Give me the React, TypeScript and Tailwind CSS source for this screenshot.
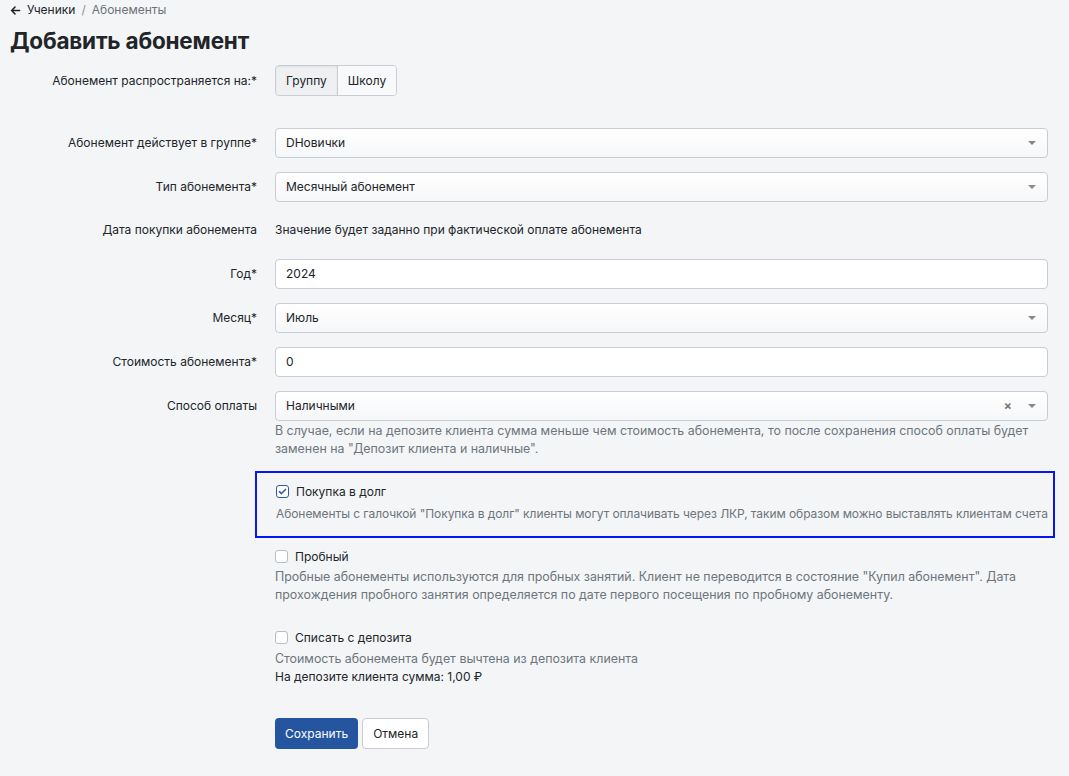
import React from 'react';

const Caret = () => (
  <span className="ml-2 inline-block h-0 w-0 border-x-[4px] border-t-[4px] border-x-transparent border-t-[#888]" />
);

const Row: React.FC<{ label: string; children: React.ReactNode; className?: string }> = ({ label, children, className }) => (
  <div className={`flex items-center ${className ?? ''}`}>
    <div className="w-[247px] shrink-0 text-right text-[12px] text-[#212529]">{label}</div>
    <div className="ml-[18px] flex-1">{children}</div>
  </div>
);

const Select: React.FC<{ value: string; clearable?: boolean }> = ({ value, clearable }) => (
  <div className="flex h-[30px] items-center rounded-[4px] border border-[#c9cdd3] bg-gradient-to-b from-white to-[#f6f7f9] pl-[10px] pr-[11px] text-[12px] text-[#212529]">
    <span className="flex-1">{value}</span>
    {clearable && <span className="mr-[8px] text-[12px] font-bold text-[#777]">×</span>}
    <Caret />
  </div>
);

const Input: React.FC<{ value: string }> = ({ value }) => (
  <div className="flex h-[30px] items-center rounded-[4px] border border-[#c9cdd3] bg-white pl-[10px] text-[12px] text-[#212529]">
    {value}
  </div>
);

const Checkbox: React.FC<{ checked?: boolean }> = ({ checked }) => (
  <span
    className={`flex h-[13px] w-[13px] shrink-0 items-center justify-center rounded-[3px] border ${
      checked ? 'border-[#2d5aa8] bg-white' : 'border-[#b9bdc4] bg-white'
    }`}
  >
    {checked && (
      <svg viewBox="0 0 12 12" className="h-[9px] w-[9px]">
        <path d="M2 6.2l2.6 2.6L10 3.2" fill="none" stroke="#2d5aa8" strokeWidth="2" strokeLinecap="round" strokeLinejoin="round" />
      </svg>
    )}
  </span>
);

export default function App() {
  return (
    <div className="min-h-[776px] bg-[#f4f5f7] pl-[10px] pr-[21px] font-['Inter',sans-serif] text-[#212529]">
      <div className="flex h-[19px] items-center pt-[1px] text-[12px]">
        <svg viewBox="0 0 12 12" className="mr-[6px] h-[11px] w-[11px]">
          <path d="M10.5 6H2M5.5 2.2L1.8 6l3.7 3.8" fill="none" stroke="#222" strokeWidth="1.7" strokeLinecap="round" strokeLinejoin="round" />
        </svg>
        <span className="text-[#212529]">Ученики</span>
        <span className="mx-[6px] text-[#8a8f98]">/</span>
        <span className="text-[#6c717a]">Абонементы</span>
      </div>
      <h1 className="mt-[7px] text-[22.5px] font-bold leading-[30px] tracking-[-0.2px] text-[#212529]">Добавить абонемент</h1>

      <Row label="Абонемент распространяется на:*" className="mt-[9px]">
        <div className="flex h-[31px] w-fit rounded-[4px] border border-[#c9cdd3] text-[12px]">
          <div className="flex items-center rounded-l-[3px] border-r border-[#c9cdd3] bg-[#eef0f2] px-[10px] shadow-[inset_0_1px_2px_rgba(0,0,0,0.08)]">Группу</div>
          <div className="flex items-center rounded-r-[3px] bg-[#f8f9fa] px-[10px]">Школу</div>
        </div>
      </Row>

      <Row label="Абонемент действует в группе*" className="mt-[32px]">
        <Select value="DНовички" />
      </Row>
      <Row label="Тип абонемента*" className="mt-[14px]">
        <Select value="Месячный абонемент" />
      </Row>
      <Row label="Дата покупки абонемента" className="mt-[13px] h-[30px]">
        <div className="text-[12px]">Значение будет заданно при фактической оплате абонемента</div>
      </Row>
      <Row label="Год*" className="mt-[14px]">
        <Input value="2024" />
      </Row>
      <Row label="Месяц*" className="mt-[14px]">
        <Select value="Июль" />
      </Row>
      <Row label="Стоимость абонемента*" className="mt-[14px]">
        <Input value="0" />
      </Row>
      <Row label="Способ оплаты" className="mt-[14px]">
        <Select value="Наличными" clearable />
      </Row>
      <div className="ml-[265px] mt-[1px] text-[12.4px] leading-[18px] text-[#6c757d]">
        В случае, если на депозите клиента сумма меньше чем стоимость абонемента, то после сохранения способ оплаты будет
        <br />
        заменен на "Депозит клиента и наличные".
      </div>

      <div className="ml-[245px] mr-[-7px] mt-[13px] h-[67px] border-2 border-[#0a14f0] pl-[19px] pt-[10px]">
        <div className="flex h-[17px] items-center">
          <Checkbox checked />
          <span className="ml-[7px] text-[12px]">Покупка в долг</span>
        </div>
        <div className="mt-[5px] whitespace-nowrap text-[12px] tracking-[-0.07px] text-[#6c757d]">
          Абонементы с галочкой "Покупка в долг" клиенты могут оплачивать через ЛКР, таким образом можно выставлять клиентам счета
        </div>
      </div>

      <div className="ml-[265px] mt-[10px]">
        <div className="flex h-[17px] items-center">
          <Checkbox />
          <span className="ml-[7px] text-[12px]">Пробный</span>
        </div>
        <div className="mt-[3px] text-[12.4px] leading-[18px] text-[#6c757d]">
          Пробные абонементы используются для пробных занятий. Клиент не переводится в состояние "Купил абонемент". Дата
          <br />
          прохождения пробного занятия определяется по дате первого посещения по пробному абонементу.
        </div>

        <div className="mt-[25px] flex h-[17px] items-center">
          <Checkbox />
          <span className="ml-[7px] text-[12px]">Списать с депозита</span>
        </div>
        <div className="mt-[4px] text-[12.4px] leading-[18px] text-[#6c757d]">Стоимость абонемента будет вычтена из депозита клиента</div>
        <div className="text-[12px] leading-[17px] text-[#212529]">На депозите клиента сумма: 1,00 ₽</div>

        <div className="mt-[33px] flex gap-[4px]">
          <button className="h-[31px] rounded-[4px] bg-[#2655a0] px-[10px] text-[12px] text-white">Сохранить</button>
          <button className="h-[31px] rounded-[4px] border border-[#c9cdd3] bg-white px-[10px] text-[12px] text-[#212529]">Отмена</button>
        </div>
      </div>
    </div>
  );
}
